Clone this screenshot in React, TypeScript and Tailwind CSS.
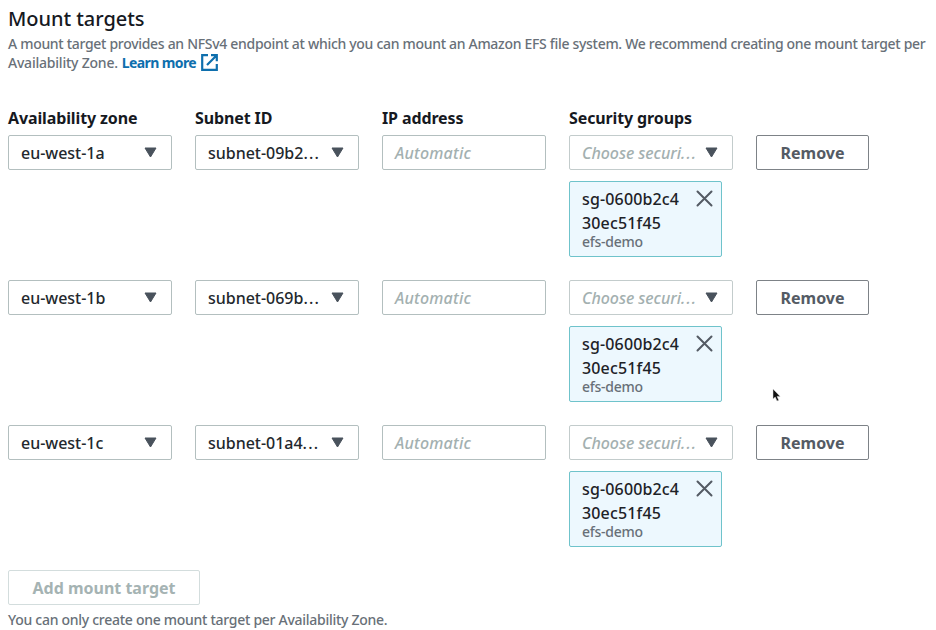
import React from "react";

const targets = [
  { zone: "eu-west-1a", subnet: "subnet-09b2" },
  { zone: "eu-west-1b", subnet: "subnet-069b" },
  { zone: "eu-west-1c", subnet: "subnet-01a4" },
];

function Caret() {
  return (
    <svg className="-mt-px h-[11px] w-[13px] shrink-0" viewBox="0 0 13 11" aria-hidden="true">
      <path d="M1 1h11L6.500 10z" fill="#49525c" stroke="#49525c" strokeWidth="1" strokeLinejoin="round" />
    </svg>
  );
}

function Select({
  children,
  placeholder = false,
  truncated = false,
}: {
  children: React.ReactNode;
  placeholder?: boolean;
  truncated?: boolean;
}) {
  return (
    <div
      className={
        placeholder
          ? "flex h-[35px] w-[164px] items-center justify-between rounded-[2px] border border-[#c3cccc] pr-[14px] pl-[12px] text-[16px] font-medium tracking-[-0.05px] whitespace-nowrap text-[#a3b0b0] italic"
          : "flex h-[35px] w-[164px] items-center justify-between rounded-[2px] border border-[#b3bfbf] pr-[14px] pl-[12px] text-[16px] font-medium tracking-[-0.02px] whitespace-nowrap text-[#23282d]"
      }
    >
      <span>
        {children}
        {truncated && <span className="tracking-[1.2px]">...</span>}
      </span>
      <Caret />
    </div>
  );
}

function SecurityGroup() {
  return (
    <div className="mt-[11px] flex h-[76px] w-[153px] justify-between rounded-[2px] border border-[#6fc3cb] bg-[#edf8fe] pt-[6px] pr-[8px] pl-[12px]">
      <div className="text-[16px] leading-[23.5px] font-medium tracking-[0.15px] text-[#1d2227]">
        <div>sg-0600b2c4</div>
        <div>30ec51f45</div>
        <div className="-mt-[2px] text-[14px] leading-[17px] tracking-[-0.25px] text-[#687078]">efs-demo</div>
      </div>
      <svg className="mt-[2px] h-[17px] w-[17px]" viewBox="0 0 17 17" aria-label="Remove security group">
        <path d="M1.500 1.500l14 14M15.500 1.500l-14 14" stroke="#545b64" strokeWidth="2" strokeLinecap="round" />
      </svg>
    </div>
  );
}

export default function App() {
  return (
    <main className="relative h-[630px] w-[936px] overflow-hidden bg-white pl-[8px] font-['Noto_Sans',sans-serif]">
      <h1 className="pt-[6px] text-[20px] leading-[26px] font-medium tracking-[-0.05px] text-[#16191f]">Mount targets</h1>
      <div className="mt-[2px] text-[14px] leading-[19px] font-medium tracking-[-0.305px] whitespace-nowrap text-[#687078]">
        <p><span>A mount target provides an NFSv4 endpoint at which you can mount an Amazon EFS file system. We recommend creating one mount target per</span></p>
        <p className="flex items-center">
          <span className="tracking-[-0.22px]">Availability Zone.</span>
          <a className="ml-[4px] flex items-center font-bold tracking-[-0.6px] text-[#0e6fad]">
            <span>Learn more</span>
            <svg className="ml-[5px] h-[17px] w-[17px]" viewBox="0 0 17 17" fill="none" stroke="#0e6fad" strokeWidth="2.2" aria-hidden="true">
              <path d="M7 1.200H1.200v14.600h14.600V10M10 1.200h5.800v6M15.500 1.500L6 11" />
            </svg>
          </a>
        </p>
      </div>
      <div className="mt-[35px] flex h-[22px] gap-[23px] text-[16px] leading-[22px] font-bold tracking-[-0.12px] whitespace-nowrap text-[#16191f]">
        <div className="w-[164px]"><span>Availability zone</span></div>
        <div className="w-[164px]"><span>Subnet ID</span></div>
        <div className="w-[164px]"><span>IP address</span></div>
        <div className="w-[164px]"><span>Security groups</span></div>
      </div>
      <div className="mt-[6px]">
        {targets.map((t) => (
          <div key={t.zone} className="flex h-[145px] items-start gap-[23px]">
            <Select>{t.zone}</Select>
            <Select truncated>{t.subnet}</Select>
            <div className="flex h-[35px] w-[164px] items-center rounded-[2px] border border-[#b3bfbf] pl-[12px] text-[16px] font-medium tracking-[0.2px] text-[#a3b0b0] italic">
              <span>Automatic</span>
            </div>
            <div>
              <Select placeholder truncated>Choose securi</Select>
              <SecurityGroup />
            </div>
            <button className="h-[35px] w-[113px] rounded-[2px] border border-[#7d8287] text-[16px] font-bold text-[#545b64]">Remove</button>
          </div>
        ))}
      </div>
      <button className="block h-[35px] w-[192px] rounded-[2px] border border-[#d3dddd] text-[16px] font-bold whitespace-nowrap text-[#a5b3b3]">Add mount target</button>
      <p className="mt-[5px] text-[14px] leading-[19px] font-medium tracking-[-0.28px] text-[#687078]"><span>You can only create one mount target per Availability Zone.</span></p>
      <svg className="absolute top-[388px] left-[772px] h-[15px] w-[10px]" viewBox="0 0 10 15" aria-hidden="true">
        <path d="M1 1v10l2.200-2 1.800 4 1.800-.8L5 8.400h3.200z" fill="#111" stroke="#ddd" strokeWidth=".5" />
      </svg>
    </main>
  );
}
